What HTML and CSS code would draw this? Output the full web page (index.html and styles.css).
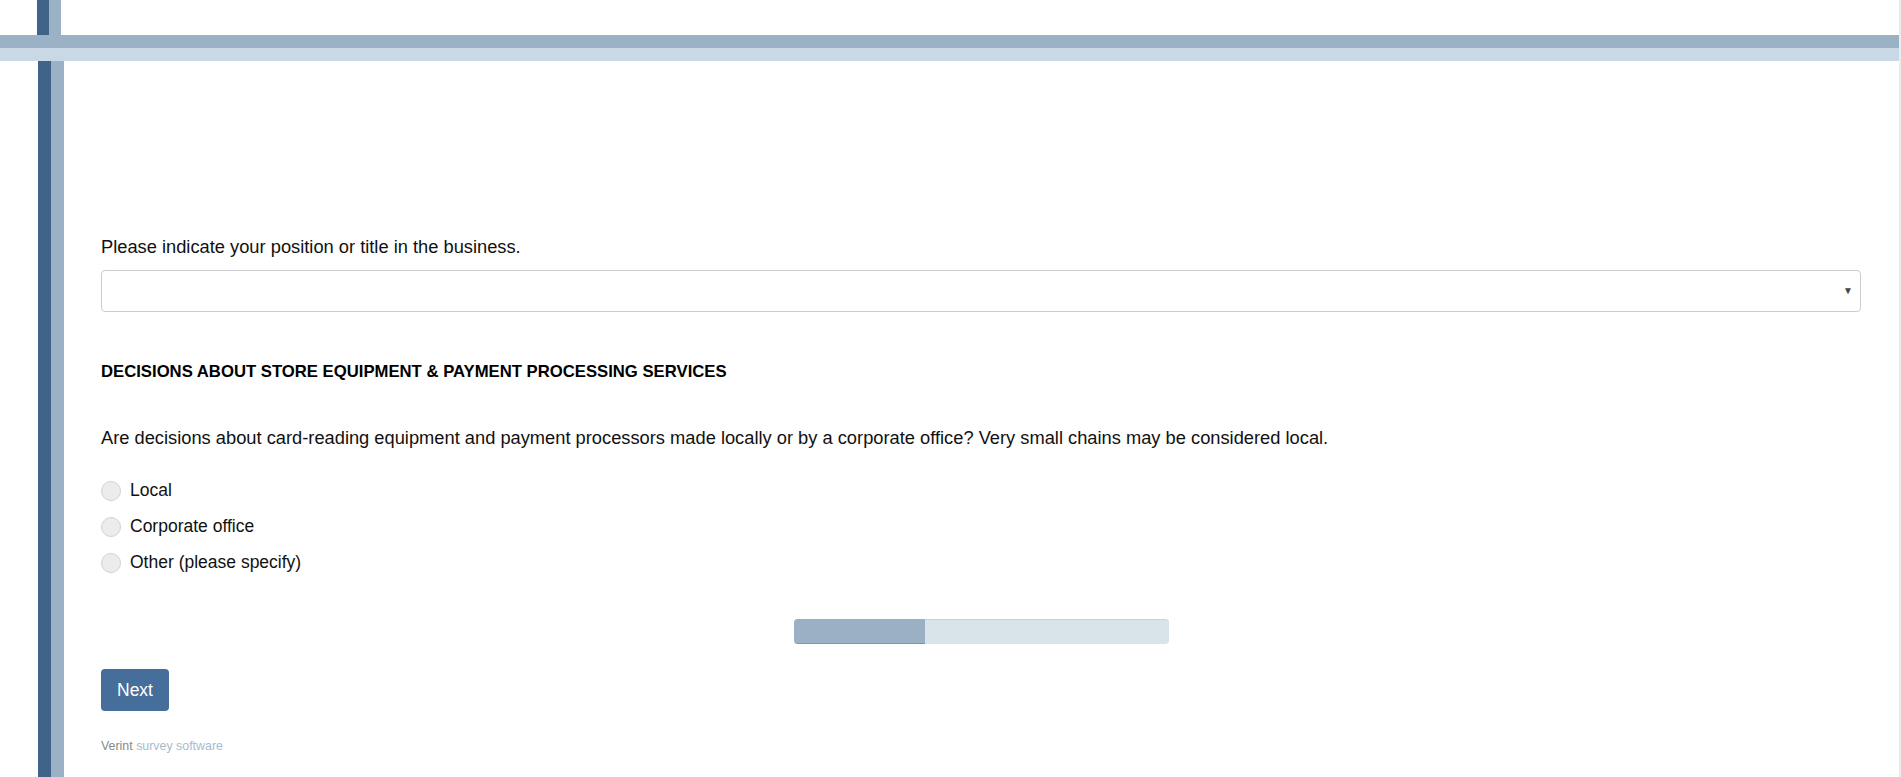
FILE: index.html
```html
<!DOCTYPE html>
<html>
<head>
    <meta name="viewport" content="width=device-width, initial-scale=1.0">
    <title>Survey</title>
    <link rel="stylesheet" href="styles.css">
</head>
<body>
    <div class="page">
        <div class="top-strip">
            <div class="top-stripe"></div>
        </div>
        <div class="band"></div>
        <div class="main">
            <form class="survey" onsubmit="return false">
                <div class="question">
                    <label class="question-text" for="position">Please indicate your position or title in the business.</label>
                    <div class="select-wrap">
                        <select id="position" class="select">
                            <option></option>
                        </select>
                        <span class="select-arrow">&#9660;</span>
                    </div>
                </div>

                <h3 class="section-title">DECISIONS ABOUT STORE EQUIPMENT &amp; PAYMENT PROCESSING SERVICES</h3>

                <div class="question">
                    <p class="question-text">Are decisions about card-reading equipment and payment processors made locally or by a corporate office? Very small chains may be considered local.</p>
                    <div class="options">
                        <label class="option"><input type="radio" name="decisions" value="local"><span class="dot"></span>Local</label>
                        <label class="option"><input type="radio" name="decisions" value="corporate"><span class="dot"></span>Corporate office</label>
                        <label class="option"><input type="radio" name="decisions" value="other"><span class="dot"></span>Other (please specify)</label>
                    </div>
                </div>

                <div class="progress">
                    <div class="progress-fill" style="width: 35%;"></div>
                </div>

                <button type="submit" class="next-button">Next</button>

                <div class="footer">Verint <a href="#">survey software</a></div>
            </form>
        </div>
    </div>
</body>
</html>
```

FILE: styles.css
```css
html, body {
    margin: 0;
    padding: 0;
    height: 100%;
    overflow: hidden;
}

body {
    font-family: "Liberation Sans", Arial, sans-serif;
    color: #111;
    background-color: #fff;
}

.page {
    height: 100%;
    display: flex;
    flex-direction: column;
    border-right: 2px solid #ececec;
}

.top-strip {
    height: 35px;
    flex-shrink: 0;
}

.top-stripe {
    margin-left: 37px;
    width: 12px;
    height: 100%;
    background-color: #3f6389;
    border-right: 12px solid #9bb1c5;
}

.band {
    height: 13px;
    flex-shrink: 0;
    background-color: #9bb1c5;
    border-bottom: 13px solid #c9d8e5;
}

.main {
    flex: 1;
    margin-left: 38px;
    border-left: 13px solid #3f6389;
    box-shadow: inset 13px 0 0 #9bb1c5;
    padding: 0 38px 0 50px;
}

.survey {
    padding-top: 174px;
}

.question-text {
    display: block;
    margin: 0;
    font-size: 18.3px;
    line-height: 23px;
}

.select-wrap {
    position: relative;
    margin-top: 12px;
}

.select {
    width: 100%;
    height: 42px;
    border: 1px solid #ccc;
    border-radius: 4px;
    background-color: #fff;
    appearance: none;
    -webkit-appearance: none;
    font-family: inherit;
    font-size: 16px;
    padding: 0 12px;
}

.select-arrow {
    position: absolute;
    right: 8px;
    top: 15px;
    font-size: 10px;
    color: #444;
    pointer-events: none;
}

.section-title {
    margin: 49px 0 0;
    font-size: 16.7px;
    line-height: 21px;
    font-weight: bold;
    color: #000;
}

.section-title + .question {
    margin-top: 44px;
}

.options {
    margin-top: 30px;
    display: flex;
    flex-direction: column;
    gap: 13px;
}

.option {
    display: flex;
    align-items: center;
    font-size: 17.5px;
    line-height: 23px;
    cursor: pointer;
}

.option input {
    display: none;
}

.dot {
    width: 18px;
    height: 18px;
    border-radius: 50%;
    border: 1px solid #d2d2d2;
    background-color: #ececec;
    margin-right: 9px;
}

.option input:checked + .dot {
    background-color: #466e9b;
}

.progress {
    width: 375px;
    height: 25px;
    margin: 45px auto 0;
    background-color: #d9e3ea;
    border-radius: 4px;
    overflow: hidden;
    box-shadow: inset 0 1px 1px rgba(0, 0, 0, 0.08);
}

.progress-fill {
    height: 100%;
    background-color: #9bb0c4;
    box-shadow: inset 0 -1px 0 rgba(0, 0, 0, 0.15);
}

.next-button {
    display: block;
    margin-top: 25px;
    width: 68px;
    height: 42px;
    border: none;
    border-radius: 4px;
    background-color: #466e9b;
    color: #fff;
    font-family: inherit;
    font-size: 17.5px;
    cursor: pointer;
}

.footer {
    margin-top: 28px;
    font-size: 12.4px;
    color: #888;
}

.footer a {
    color: #a7bbd0;
    text-decoration: none;
}
```
